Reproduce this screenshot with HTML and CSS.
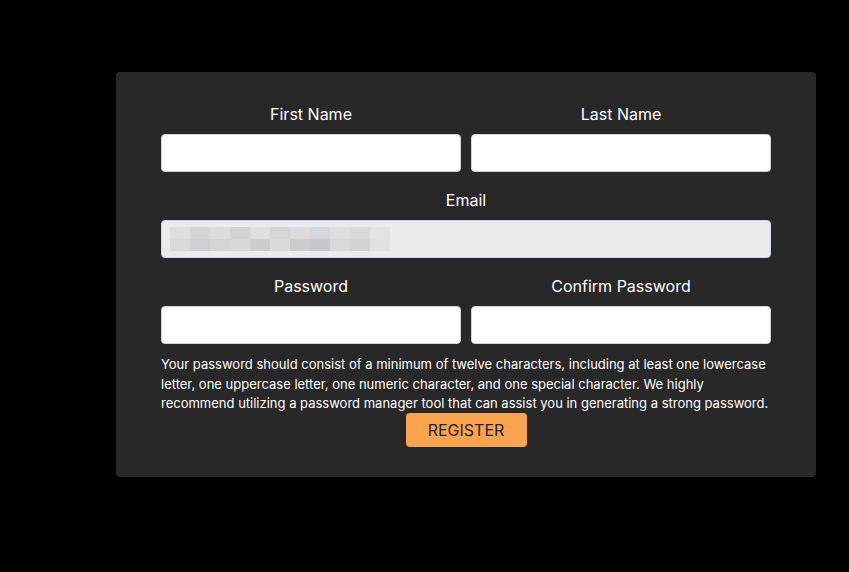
FILE: index.html
```html
<!DOCTYPE html>
<html>
<head>
<meta charset="utf-8">
<link rel="stylesheet" href="styles.css">
</head>
<body>
<div class="page">
  <form class="card">
    <div class="row two">
      <div class="field">
        <label class="label">First Name</label>
        <input class="input" type="text">
      </div>
      <div class="field">
        <label class="label">Last Name</label>
        <input class="input" type="text">
      </div>
    </div>
    <div class="row">
      <div class="field">
        <label class="label">Email</label>
        <div class="input disabled">
          <div class="blur">
            <span class="px p1"></span><span class="px p2"></span><span class="px p3"></span><span class="px p4"></span><span class="px p5"></span><span class="px p6"></span><span class="px p7"></span><span class="px p8"></span><span class="px p9"></span><span class="px p10"></span><span class="px p11"></span>
            <span class="px q1"></span><span class="px q2"></span><span class="px q3"></span><span class="px q4"></span><span class="px q5"></span><span class="px q6"></span><span class="px q7"></span><span class="px q8"></span><span class="px q9"></span><span class="px q10"></span><span class="px q11"></span>
          </div>
        </div>
      </div>
    </div>
    <div class="row two">
      <div class="field">
        <label class="label">Password</label>
        <input class="input" type="password">
      </div>
      <div class="field">
        <label class="label">Confirm Password</label>
        <input class="input" type="password">
      </div>
    </div>
    <p class="hint">Your password should consist of a minimum of twelve characters, including at least one lowercase letter, one uppercase letter, one numeric character, and one special character. We highly recommend utilizing a password manager tool that can assist you in generating a strong password.</p>
    <div class="actions">
      <button class="btn" type="button">REGISTER</button>
    </div>
  </form>
</div>
</body>
</html>
```
FILE: styles.css
```css
* { box-sizing: border-box; }
html, body { margin: 0; padding: 0; background: #000; }
body { font-family: Inter, "Noto Sans", sans-serif; color: #fff; }
.page { padding: 72px 0 0 116px; }
.card {
  width: 700px;
  background: #282828;
  border-radius: 4px;
  padding: 30px 45px 30px 45px;
  display: flex;
  flex-direction: column;
  gap: 16px;
}
.row { display: grid; grid-template-columns: 1fr; gap: 10px; }
.row.two { grid-template-columns: 1fr 1fr; }
.field { display: flex; flex-direction: column; }
.label {
  text-align: center;
  font-size: 16px;
  line-height: 24px;
  margin-bottom: 8px;
}
.input {
  height: 38px;
  width: 100%;
  border: 1px solid #ced4da;
  border-radius: 4px;
  background: #fff;
  font: inherit;
  padding: 0 12px;
}
.input.disabled { background: #e9ecef; display: flex; align-items: center; padding: 0 8px; }
.blur { display: grid; grid-template-columns: repeat(11, 20px); grid-template-rows: 12px 12px; }
.px { display: block; }
.p1 { background: #dcdee1; } .p2 { background: #d3d5d8; } .p3 { background: #dadcdf; } .p4 { background: #d1d3d6; }
.p5 { background: #dedfe2; } .p6 { background: #d6d6d8; } .p7 { background: #dcdadb; } .p8 { background: #d5d7da; }
.p9 { background: #dcdee1; } .p10 { background: #d6d8db; } .p11 { background: #e1e3e6; }
.q1 { background: #d8d9dc; } .q2 { background: #cdd0d4; } .q3 { background: #d3d5d8; } .q4 { background: #d6d7da; }
.q5 { background: #cbcdd1; } .q6 { background: #d9dbde; } .q7 { background: #c9cbcf; } .q8 { background: #c6c8cd; }
.q9 { background: #d7d9dc; } .q10 { background: #d2d4d7; } .q11 { background: #dfe1e4; }
.hint {
  margin: -5px 0 0 0;
  font-size: 13px;
  line-height: 19.5px;
}
.actions { display: flex; justify-content: center; margin-top: -17px; }
.btn {
  width: 121px;
  height: 34px;
  background: #fba450;
  color: #222;
  border: none;
  border-radius: 4px;
  font-family: Inter, "Noto Sans", sans-serif;
  font-size: 16px;
}
```
